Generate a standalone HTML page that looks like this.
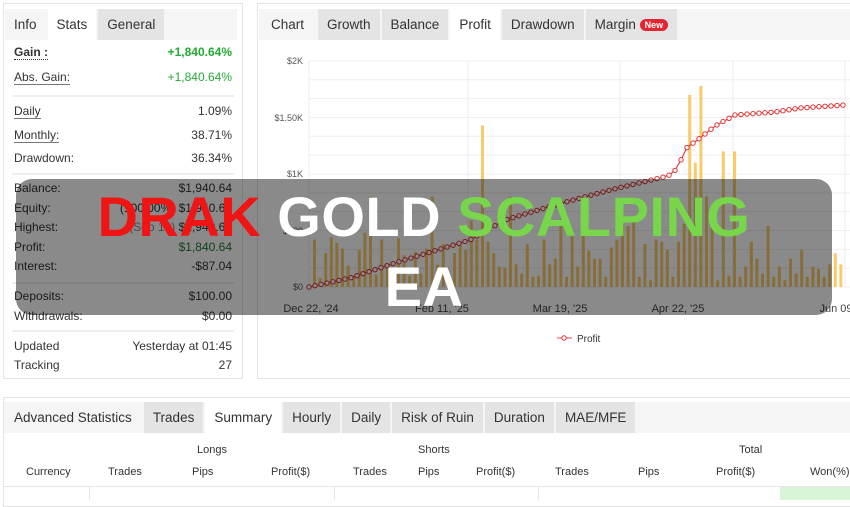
<!DOCTYPE html>
<html><head><meta charset="utf-8"><style>
*{box-sizing:border-box;margin:0;padding:0}
body{width:850px;height:500px;overflow:hidden;background:#fff;font-family:"Liberation Sans",Arial,sans-serif;color:#333;position:relative}
.panel{position:absolute;border:1px solid #e3e3e3;background:#fff}
.tabs{position:absolute;left:0;right:0;top:5px;height:31px;background:#f5f5f5;display:flex}
.tab{height:31px;line-height:31px;font-size:13.5px;padding:0 9px;background:#e4e4e4;margin-right:2px;color:#333}
.tab.a{background:#fff}.tab.p{background:#f5f5f5}
.row{position:absolute;left:10px;right:10px;font-size:12px;display:flex;justify-content:space-between}
.u{border-bottom:1px solid #777}
.d{border-bottom:1px dotted #333;font-weight:bold}
.g{color:#22aa33}.dg{color:#1e7b2e}
.sep{position:absolute;left:8px;right:8px;height:2px;background:#eee}
.ov{position:absolute;left:16px;top:179px;width:816px;height:136px;background:rgba(0,0,0,0.46);border-radius:16px;text-align:center;font-weight:bold;font-size:56px;line-height:70px;padding-top:3px;color:#fff;letter-spacing:0.5px}
.th{position:absolute;font-size:11px;color:#333}
</style></head><body>
<div class="panel" style="left:3px;top:3px;width:240px;height:376px">
 <div class="tabs" style="left:1px;right:5px"><div class="tab p">Info</div><div class="tab a">Stats</div><div class="tab">General</div></div>
 <div class="row" style="top:41px"><span class="d">Gain :</span><span class="g" style="font-weight:bold">+1,840.64%</span></div>
 <div class="row" style="top:66px"><span class="u">Abs. Gain:</span><span class="g">+1,840.64%</span></div>
 <div class="sep" style="top:91px"></div>
 <div class="row" style="top:100px"><span class="u">Daily</span><span>1.09%</span></div>
 <div class="row" style="top:124px"><span class="u">Monthly:</span><span>38.71%</span></div>
 <div class="row" style="top:147px"><span>Drawdown:</span><span>36.34%</span></div>
 <div class="sep" style="top:169px"></div>
 <div class="row" style="top:177px"><span>Balance:</span><span>$1,940.64</span></div>
 <div class="row" style="top:197px"><span>Equity:</span><span>(100.00%) $1,940.64</span></div>
 <div class="row" style="top:216px"><span>Highest:</span><span><span style="color:#888">(Sep 19)</span> $1,940.64</span></div>
 <div class="row" style="top:236px"><span>Profit:</span><span class="dg">$1,840.64</span></div>
 <div class="row" style="top:255px"><span>Interest:</span><span>-$87.04</span></div>
 <div class="sep" style="top:278px"></div>
 <div class="row" style="top:285px"><span>Deposits:</span><span>$100.00</span></div>
 <div class="row" style="top:305px"><span>Withdrawals:</span><span>$0.00</span></div>
 <div class="sep" style="top:326px"></div>
 <div class="row" style="top:335px"><span>Updated</span><span>Yesterday at 01:45</span></div>
 <div class="row" style="top:354px"><span>Tracking</span><span>27</span></div>
</div>
<div class="panel" style="left:257px;top:3px;width:600px;height:376px">
 <div class="tabs" style="left:1px"><div class="tab p" style="padding:0 12px">Chart</div><div class="tab">Growth</div><div class="tab">Balance</div><div class="tab a">Profit</div><div class="tab">Drawdown</div><div class="tab">Margin <span style="background:#e3262f;color:#fff;font-size:9px;font-weight:bold;border-radius:7px;padding:1px 5px;vertical-align:1px">New</span></div></div>
</div>
<svg id="ch" style="position:absolute;left:0;top:0" width="850" height="380" font-family="Liberation Sans,Arial,sans-serif"></svg>
<div class="panel" style="left:3px;top:397px;width:860px;height:110px">
 <div class="tabs" style="top:4px;height:31px"><div class="tab p" style="padding:0 10px">Advanced Statistics</div><div class="tab">Trades</div><div class="tab a">Summary</div><div class="tab">Hourly</div><div class="tab">Daily</div><div class="tab">Risk of Ruin</div><div class="tab">Duration</div><div class="tab">MAE/MFE</div></div>
</div>
<div class="th" style="left:197px;top:444px">Longs</div>
<div class="th" style="left:418px;top:444px">Shorts</div>
<div class="th" style="left:739px;top:444px">Total</div>
<div class="th" style="left:26px;top:466px">Currency</div>
<div class="th" style="left:108px;top:466px">Trades</div>
<div class="th" style="left:192px;top:466px">Pips</div>
<div class="th" style="left:271px;top:466px">Profit($)</div>
<div class="th" style="left:353px;top:466px">Trades</div>
<div class="th" style="left:418px;top:466px">Pips</div>
<div class="th" style="left:476px;top:466px">Profit($)</div>
<div class="th" style="left:555px;top:466px">Trades</div>
<div class="th" style="left:638px;top:466px">Pips</div>
<div class="th" style="left:716px;top:466px">Profit($)</div>
<div class="th" style="left:810px;top:466px">Won(%)</div>
<div style="position:absolute;left:3px;right:0;top:486px;height:1px;background:#e6e6e6"></div>
<div style="position:absolute;left:89px;top:487px;width:1px;height:13px;background:#e6e6e6"></div>
<div style="position:absolute;left:334px;top:487px;width:1px;height:13px;background:#e6e6e6"></div>
<div style="position:absolute;left:538px;top:487px;width:1px;height:13px;background:#e6e6e6"></div>
<div style="position:absolute;left:780px;top:487px;width:70px;height:13px;background:#d8f5d8"></div>
<div class="ov"><span style="color:#f01515">DRAK</span> GOLD <span style="color:#77d64a">SCALPING</span><br>EA</div>
<script>
var s=document.getElementById('ch'),h='';
var y0=287,k=226/2000;
for(var i=0;i<=12;i++){var y=y0-i*k*166.7;h+='<line x1="309" x2="850" y1="'+y+'" y2="'+y+'" stroke="#efefef"/>';}
[309,468,620,733,845].forEach(function(x){h+='<line x1="'+x+'" x2="'+x+'" y1="61" y2="287" stroke="#ececec"/>';});
[['$2K',61],['$1.50K',118],['$1K',174],['$500',231],['$0',287]].forEach(function(a){h+='<text x="303" y="'+(a[1]+3)+'" font-size="9" fill="#555" text-anchor="end">'+a[0]+'</text>';});
[['Dec 22, \'24',311],['Feb 11, \'25',442],['Mar 19, \'25',560],['Apr 22, \'25',678],['Jun 09',836]].forEach(function(a){h+='<text x="'+a[1]+'" y="312" font-size="11" fill="#444" text-anchor="middle">'+a[0]+'</text>';});
var hs=[420,80,300,440,390,340,190,100,330,480,800,110,420,200,0,430,280,100,310,120,340,800,200,380,0,300,400,0,590,420,1430,400,300,180,170,800,200,120,380,90,100,420,200,0,600,90,450,0,520,320,250,250,0,350,420,550,540,600,0,380,0,420,400,0,0,400,560,1700,1100,1780,800,600,0,1200,100,1200,0,0,400,0,0,540,0,0,0,0,0,0,0,0,160,90,200,300,200,170,0,600,0,200,300];
var H=[];for(var i=0;i<95;i++){var v=hs[i]||0;if(!v)v=[60,250,120,330,90,180][i%6];H.push(v);}
H.forEach(function(v,i){var x=313+i*5.6;var hh=v*k;h+='<rect x="'+x+'" y="'+(y0-hh)+'" width="3" height="'+hh+'" fill="#f7c45a" opacity="0.9"/>';});
var pts=[[309,287],[350,278],[398,262],[470,240],[505,220],[555,205],[610,190],[668,176],[678,168],[685,149],[700,138],[715,126],[735,115],[775,112],[800,108],[845,105]];
var L=[];for(var x=309;x<=848;x+=6){for(var j=1;j<pts.length;j++){if(x<=pts[j][0]){var a=pts[j-1],b=pts[j];L.push([x,a[1]+(b[1]-a[1])*(x-a[0])/(b[0]-a[0])]);break;}}}
h+='<polyline fill="none" stroke="#e84040" stroke-width="1.2" points="'+L.map(function(p){return p.join(',')}).join(' ')+'"/>';
L.forEach(function(p){h+='<circle cx="'+p[0]+'" cy="'+p[1]+'" r="2.2" fill="#fff" stroke="#d33" stroke-width="1"/>';});
h+='<line x1="557" x2="572" y1="338" y2="338" stroke="#e84040"/><circle cx="564" cy="338" r="2.2" fill="#fff" stroke="#d33"/><text x="577" y="342" font-size="10" fill="#333">Profit</text>';
s.innerHTML=h;
</script>
</body></html>
